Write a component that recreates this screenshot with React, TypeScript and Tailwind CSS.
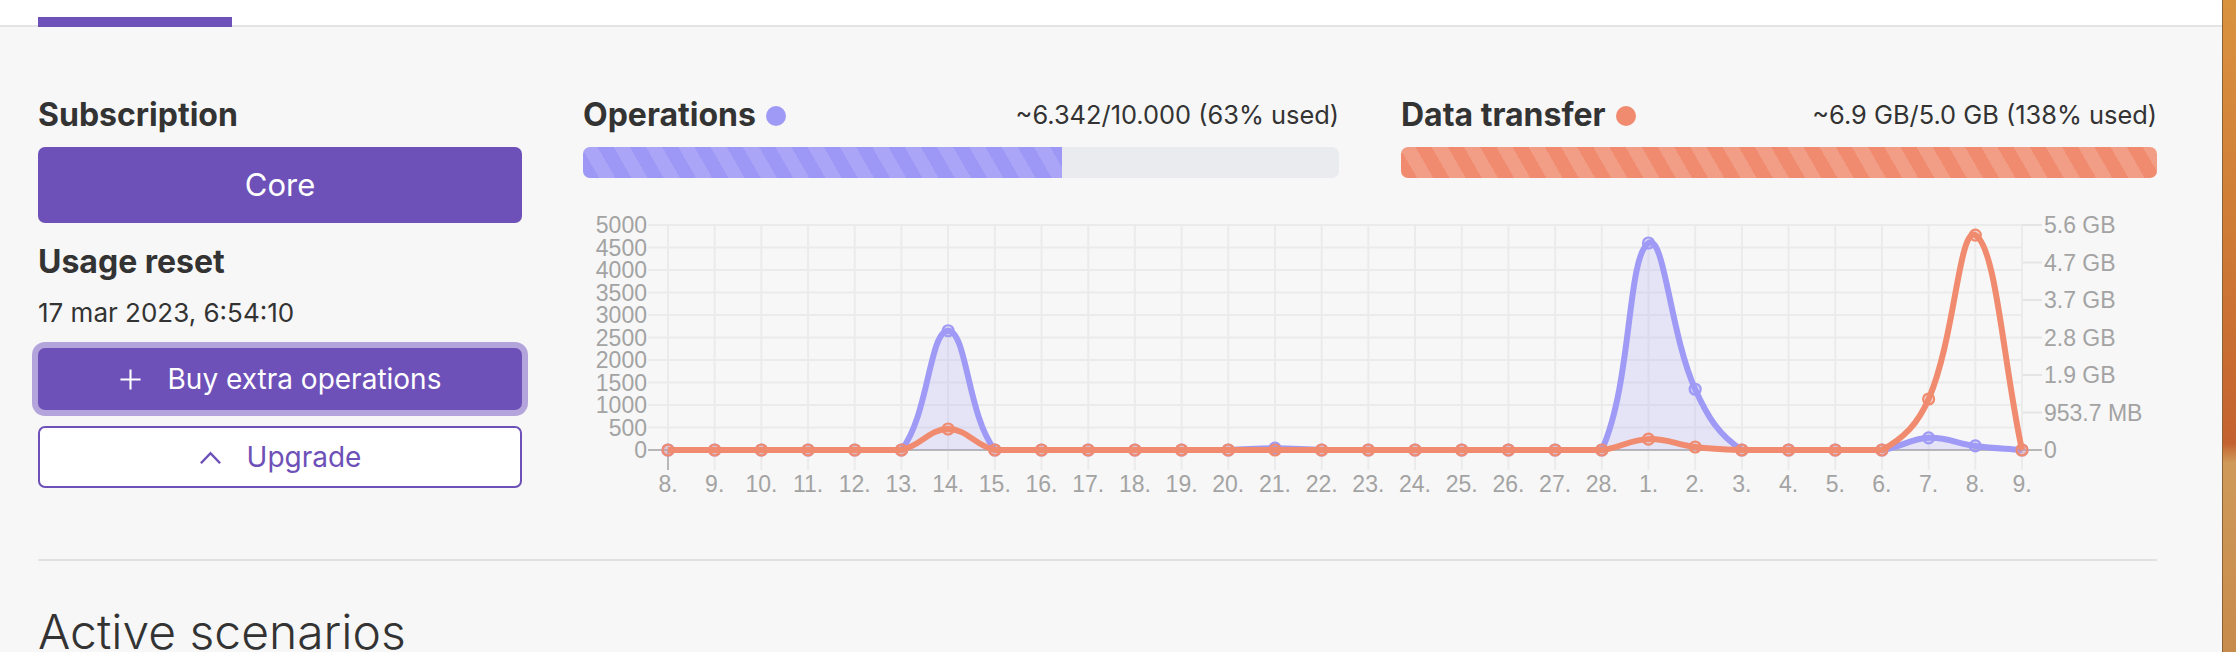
import React from 'react'

const days = [
  '8.', '9.', '10.', '11.', '12.', '13.', '14.', '15.', '16.', '17.', '18.', '19.', '20.', '21.', '22.',
  '23.', '24.', '25.', '26.', '27.', '28.', '1.', '2.', '3.', '4.', '5.', '6.', '7.', '8.', '9.',
]
const ops = [0, 0, 0, 0, 0, 0, 2650, 0, 0, 0, 0, 0, 0, 40, 0, 0, 0, 0, 0, 0, 0, 4600, 1350, 0, 0, 0, 0, 270, 90, 0]
// transfer in units of 1e9 bytes
const transfer = [0, 0, 0, 0, 0, 0, 0.56, 0, 0, 0, 0, 0, 0, 0, 0, 0, 0, 0, 0, 0, 0, 0.29, 0.08, 0, 0, 0, 0, 1.36, 5.73, 0]

const W = 1574
const H = 305
const L = 85
const R = 1439
const T = 25
const B = 250

const xAt = (i: number) => L + (i * (R - L)) / (days.length - 1)
const yOps = (v: number) => B - (v / 5000) * (B - T)
const yGb = (v: number) => B - (v / 6) * (B - T)

type Pt = { x: number; y: number }

// same spline as chart.js (tension 0.4, control points capped to the chart area)
function curve(pts: Pt[]) {
  const clamp = (y: number) => Math.min(B, Math.max(T, y))
  const cps = pts.map((p, i) => {
    const prev = pts[i - 1] ?? p
    const next = pts[i + 1] ?? p
    const d01 = Math.hypot(p.x - prev.x, p.y - prev.y)
    const d12 = Math.hypot(next.x - p.x, next.y - p.y)
    const sum = d01 + d12
    const fa = sum ? (0.4 * d01) / sum : 0
    const fb = sum ? (0.4 * d12) / sum : 0
    return {
      inn: { x: p.x - fa * (next.x - prev.x), y: clamp(p.y - fa * (next.y - prev.y)) },
      out: { x: p.x + fb * (next.x - prev.x), y: clamp(p.y + fb * (next.y - prev.y)) },
    }
  })
  let d = `M${pts[0].x},${pts[0].y}`
  for (let i = 1; i < pts.length; i++) {
    const a = cps[i - 1].out
    const b = cps[i].inn
    d += ` C${a.x},${a.y} ${b.x},${b.y} ${pts[i].x},${pts[i].y}`
  }
  return d
}

const leftTicks = [0, 500, 1000, 1500, 2000, 2500, 3000, 3500, 4000, 4500, 5000]
const rightTicks = ['0', '953.7 MB', '1.9 GB', '2.8 GB', '3.7 GB', '4.7 GB', '5.6 GB']

function UsageChart() {
  const opsPts = ops.map((v, i) => ({ x: xAt(i), y: yOps(v) }))
  const gbPts = transfer.map((v, i) => ({ x: xAt(i), y: yGb(v) }))
  const opsLine = curve(opsPts)
  const gbLine = curve(gbPts)
  const opsFill = `${opsLine} L${R},${B} L${L},${B} Z`
  const font = "'Liberation Sans', Arial, sans-serif"

  return (
    <svg width={W} height={H} viewBox={`0 0 ${W} ${H}`} className="block">
      {leftTicks.map((t) => (
        <line key={t} x1={L - 20} x2={R} y1={yOps(t)} y2={yOps(t)} stroke="#ebebeb" strokeWidth={2} />
      ))}
      {rightTicks.map((t, i) => (
        <line key={t} x1={R} x2={R + 20} y1={yGb(i)} y2={yGb(i)} stroke="#e4e4e4" strokeWidth={2} />
      ))}
      {days.map((d, i) => (
        <line key={i} x1={xAt(i)} x2={xAt(i)} y1={T} y2={B + 20} stroke="#ebebeb" strokeWidth={2} />
      ))}
      <line x1={L - 20} x2={R + 20} y1={B} y2={B} stroke="#b8b8b8" strokeWidth={2} />
      <line x1={L} x2={L} y1={B} y2={B + 20} stroke="#b8b8b8" strokeWidth={2} />

      <path d={opsFill} fill="rgba(159,154,245,0.2)" />
      <path d={opsLine} fill="none" stroke="#9f9af5" strokeWidth={6} />
      {opsPts.map((p, i) => (
        <circle key={i} cx={p.x} cy={p.y} r={5.5} fill="rgba(159,154,245,0.3)" stroke="#9f9af5" strokeWidth={2.2} />
      ))}
      <path d={gbLine} fill="none" stroke="#f08b6f" strokeWidth={6} />
      {gbPts.map((p, i) => (
        <circle key={i} cx={p.x} cy={p.y} r={5.5} fill="rgba(240,139,111,0.3)" stroke="#f08b6f" strokeWidth={2.2} />
      ))}

      <g fill="#a3a3a3" fontFamily={font} fontSize={23}>
        {leftTicks.map((t) => (
          <text key={t} x={L - 21} y={yOps(t) + 8} textAnchor="end">
            {t}
          </text>
        ))}
        {rightTicks.map((t, i) => (
          <text key={t} x={R + 22} y={yGb(i) + 8}>
            {t}
          </text>
        ))}
        {days.map((d, i) => (
          <text key={i} x={xAt(i)} y={292} textAnchor="middle">
            {d}
          </text>
        ))}
      </g>
    </svg>
  )
}

function PlusIcon() {
  return (
    <svg width="23" height="23" viewBox="0 0 24 24" fill="none" stroke="currentColor" strokeWidth={2.2}>
      <path d="M12 1.5v21M1.5 12h21" />
    </svg>
  )
}

function ChevronUpIcon() {
  return (
    <svg width="23" height="15" viewBox="0 0 24 15" fill="none" stroke="currentColor" strokeWidth={2.6}>
      <path d="M2 13.5 12 3l10 10.5" />
    </svg>
  )
}

export default function App() {
  const opsPct = Math.min(100, (6342 / 10000) * 100)
  const gbPct = Math.min(100, (6.9 / 5.0) * 100)

  return (
    <div className="flex h-screen overflow-hidden bg-[#f7f7f7] font-[Inter,'Noto_Sans',sans-serif] text-[#333]">
      <div className="min-w-0 flex-1">
        <div className="flex h-[27px] items-end border-b-2 border-[#e4e4e7] bg-white pl-[38px]">
          <div className="-mb-[2px] h-[10px] w-[194px] bg-[#6d51b8]" />
        </div>

        <div className="pl-[38px] pr-[65px] pt-[69px]">
          <div className="grid grid-cols-[484px_1fr] gap-x-[61px]">
            <div className="flex flex-col">
              <h2 className="text-[32px] leading-[37px] font-bold">Subscription</h2>
              <div className="mt-[14px] flex h-[76px] items-center justify-center rounded-[7px] bg-[#6d51b8] text-[31px] text-white">
                Core
              </div>
              <h2 className="mt-[20px] text-[32px] leading-[37px] font-bold">Usage reset</h2>
              <p className="mt-[17px] text-[26px] leading-[32px]">17 mar 2023, 6:54:10</p>
              <button className="mt-[19px] flex h-[62px] items-center justify-center gap-[26px] rounded-[7px] bg-[#6d51b8] text-[28px] text-white ring-[6px] ring-[#b3a5db]">
                <PlusIcon />
                Buy extra operations
              </button>
              <button className="mt-[16px] flex h-[62px] items-center justify-center gap-[25px] rounded-[7px] border-2 border-[#6d51b8] bg-white text-[28px] text-[#6d51b8]">
                <ChevronUpIcon />
                Upgrade
              </button>
            </div>

            <div className="flex flex-col">
              <div className="grid grid-cols-2 gap-x-[62px]">
                <div>
                  <div className="flex items-center justify-between">
                    <div className="flex items-center gap-[10px]">
                      <h3 className="text-[32px] leading-[37px] font-bold">Operations</h3>
                      <span className="mt-[2px] h-[20px] w-[20px] rounded-full bg-[#9f9af5]" />
                    </div>
                    <span className="text-[25.4px] leading-[37px]">~6.342/10.000 (63% used)</span>
                  </div>
                  <div className="mt-[14px] h-[31px] overflow-hidden rounded-[7px] bg-[#e9ebee]">
                    <div
                      className="h-full bg-[repeating-linear-gradient(60deg,#9d97f5_0px,#9d97f5_14px,#aaa5f6_14px,#aaa5f6_28px)]"
                      style={{ width: `${opsPct}%` }}
                    />
                  </div>
                </div>
                <div>
                  <div className="flex items-center justify-between">
                    <div className="flex items-center gap-[10px]">
                      <h3 className="text-[32px] leading-[37px] font-bold">Data transfer</h3>
                      <span className="mt-[2px] h-[20px] w-[20px] rounded-full bg-[#f08b6f]" />
                    </div>
                    <span className="text-[25.4px] leading-[37px]">~6.9 GB/5.0 GB (138% used)</span>
                  </div>
                  <div className="mt-[14px] h-[31px] overflow-hidden rounded-[7px] bg-[#e9ebee]">
                    <div
                      className="h-full bg-[repeating-linear-gradient(60deg,#f08b6f_0px,#f08b6f_14px,#f29e87_14px,#f29e87_28px)]"
                      style={{ width: `${gbPct}%` }}
                    />
                  </div>
                </div>
              </div>
              <div className="mt-[22px]">
                <UsageChart />
              </div>
            </div>
          </div>

          <div className="mt-[54px] h-[2px] bg-[#e1e1e1]" />
          <h1 className="mt-[42px] text-[48px] leading-[58px] font-light">Active scenarios</h1>
        </div>
      </div>

      <div className="w-[14px] shrink-0 border-l border-[#8a6233] bg-[linear-gradient(180deg,#d9933f_0%,#cf7c36_35%,#c4622f_68%,#cf9a5a_71%,#c78b4b_100%)]" />
    </div>
  )
}
